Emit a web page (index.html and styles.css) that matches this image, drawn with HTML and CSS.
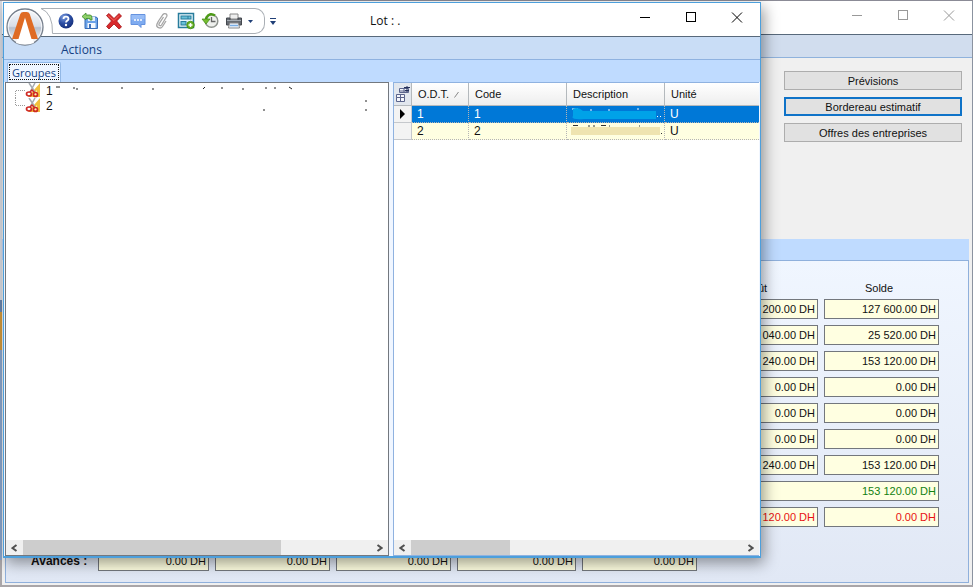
FILE: index.html
```html
<!DOCTYPE html>
<html lang="fr">
<head>
<meta charset="utf-8">
<title>Lot</title>
<link rel="stylesheet" href="styles.css">
</head>
<body>
<main class="desktop">
  <section class="window back">
    <header class="back-title">
      <div class="caption">
        <button aria-label="Réduire"><svg width="12" height="12"><path d="M1 5.500h10"/></svg></button>
        <button aria-label="Agrandir"><svg width="12" height="12"><rect x="1.500" y=".5" width="9" height="9"/></svg></button>
        <button aria-label="Fermer"><svg width="12" height="12"><path d="M1 0.500l10 10M11 .5l-10 10"/></svg></button>
      </div>
    </header>
    <div class="back-ribbon"></div>
    <div class="actions">
      <button>Prévisions</button>
      <button class="selected">Bordereau estimatif</button>
      <button>Offres des entreprises</button>
    </div>
    <div class="band"></div>
    <div class="panel">
      <div class="amounts">
        <span class="head">Coût</span><span class="head">Solde</span>
        <input readonly aria-label="Coût 1" value="200.00 DH"><input readonly aria-label="Solde 1" value="127 600.00 DH">
        <input readonly aria-label="Coût 2" value="040.00 DH"><input readonly aria-label="Solde 2" value="25 520.00 DH">
        <input readonly aria-label="Coût 3" value="240.00 DH"><input readonly aria-label="Solde 3" value="153 120.00 DH">
        <input readonly aria-label="Coût 4" value="0.00 DH"><input readonly aria-label="Solde 4" value="0.00 DH">
        <input readonly aria-label="Coût 5" value="0.00 DH"><input readonly aria-label="Solde 5" value="0.00 DH">
        <input readonly aria-label="Coût 6" value="0.00 DH"><input readonly aria-label="Solde 6" value="0.00 DH">
        <input readonly aria-label="Coût 7" value="240.00 DH"><input readonly aria-label="Solde 7" value="153 120.00 DH">
        <input readonly class="wide green" aria-label="Total" value="153 120.00 DH">
        <input readonly class="red" aria-label="Coût 8" value="120.00 DH"><input readonly class="red" aria-label="Solde 8" value="0.00 DH">
      </div>
      <div class="advances">
        <label for="av1">Avances :</label>
        <input readonly id="av1" class="first" value="0.00 DH">
        <input readonly aria-label="Avances 2" value="0.00 DH">
        <input readonly aria-label="Avances 3" value="0.00 DH">
        <input readonly aria-label="Avances 4" class="larger" value="0.00 DH">
        <input readonly aria-label="Avances 5" value="0.00 DH">
      </div>
    </div>
  </section>

  <section class="window front">
    <header class="front-title">
      <div class="toolbar">
        <svg class="curve" width="14" height="26"><path d="M0 .5Q12 5 11.500 25.500H14M0 .5H14"/></svg>
        <button aria-label="Aide"><svg width="18" height="18" viewBox="0 0 18 18"><defs><radialGradient id="hb" cx=".35" cy=".25" r=".8"><stop offset="0" stop-color="#7f9fe0"/><stop offset=".5" stop-color="#2c4fa5"/><stop offset="1" stop-color="#142d78"/></radialGradient></defs><circle cx="9" cy="9" r="7.500" fill="url(#hb)"/><path d="M6.500 7Q6.600 4.700 9 4.700T11.500 7C11.500 8.500 9 8.700 9 10.600" fill="none" stroke="#fff" stroke-width="1.800"/><circle cx="9" cy="13" r="1.200" fill="#fff"/></svg></button>
        <button aria-label="Enregistrer et fermer"><svg width="18" height="18" viewBox="0 0 18 18"><path d="M4 5h11l1.500 1v10.500H4z" fill="#6ba2e8" stroke="#376cb8"/><rect x="7" y="5" width="7" height="4" fill="#e4effc"/><rect x="6.500" y="11" width="8" height="5" fill="#f4f8fe"/><rect x="8" y="12" width="2" height="4" fill="#3f72bd"/><path d="M1 4.500L5 1v2h4q2 0 2 3v2H9V6.500H5V8z" fill="#8ed069" stroke="#3e8c2a" stroke-width=".8"/></svg></button>
        <button aria-label="Supprimer"><svg width="18" height="18" viewBox="0 0 18 18"><path d="M1.500 3.500L4 1.500 9 6.500 14 1.500 16.500 4 11.700 9 16.500 15 14 17 9 12 4 17 1.500 14.500 6.500 9z" fill="#d8292b" stroke="#a51519" stroke-width=".8"/><path d="M3 3.500l6 5 5-5" fill="none" stroke="#f06a60"/></svg></button>
        <button aria-label="Commentaire"><svg width="18" height="18" viewBox="0 0 18 18"><path d="M2 2.500h14v10h-4v3l-3-3H2z" fill="#7eabf0" stroke="#6592df"/><path d="M2.500 3h13v4q-7-1-13 1z" fill="#98bdf6"/><path d="M5 8h2M8 8h2M11 8h2" stroke="#fff" stroke-width="1.500"/></svg></button>
        <button aria-label="Pièce jointe"><svg width="18" height="18" viewBox="0 0 18 18"><path d="M5.500 9l4.500-6.500c1.500-2 5-.3 3.700 2L8.500 13c-1 1.500-3.300.3-2.400-1.300L10.500 5M13 9l-3.500 5.500C7.500 17.500 2.600 15.500 4 12l1.500-3" fill="none" stroke="#a5a5a5" stroke-width="1.300"/></svg></button>
        <button aria-label="Ajouter une vue"><svg width="18" height="18" viewBox="0 0 18 18"><rect x="1.500" y="1.500" width="15" height="14" fill="#e8f7fc" stroke="#287c9c" stroke-width="1.500"/><rect x="4" y="4" width="10" height="3" fill="#68c0d8" stroke="#287c9c"/><rect x="4" y="9.500" width="5" height="3.500" fill="#68c0d8" stroke="#287c9c"/><path d="M11 4v3" stroke="#287c9c"/><circle cx="13.500" cy="13" r="3.800" fill="#67af27" stroke="#39850c" stroke-width=".7"/><path d="M11.500 13h4M13.500 11v4" stroke="#fff" stroke-width="1.500"/></svg></button>
        <button aria-label="Historique"><svg width="18" height="18" viewBox="0 0 18 18"><circle cx="10.500" cy="9" r="6.300" fill="#eef0ed" stroke="#8e938d" stroke-width="1.500"/><path d="M10.500 5v4.500h4" fill="none" stroke="#666" stroke-width="1.300"/><path d="M14 3.500Q9 0 5.500 5.500L5 8" fill="none" stroke="#4e9b18" stroke-width="2.500"/><path d="M1 7h8l-4 5z" fill="#75bd2f" stroke="#3d8810" stroke-width=".7"/></svg></button>
        <button aria-label="Imprimer"><svg width="18" height="18" viewBox="0 0 18 18"><path d="M5 2h8v5H5z" fill="#eee" stroke="#888"/><path d="M1.500 6H5v2h8V6h3.500v7h-15z" fill="#666b72" stroke="#44484e"/><path d="M2 8.500h14" stroke="#a5abb2"/><path d="M4.500 11h9l1 5h-11z" fill="#eff5fc" stroke="#888"/><path d="M5 13.500h8" stroke="#79aee5" stroke-width="1.500"/></svg></button>
        <button class="drop" aria-label="Options d'impression"><svg width="5" height="3"><path d="M0 0h5L2.500 3z" fill="#203f77"/></svg></button>
      </div>
      <button class="customize" aria-label="Personnaliser"><svg width="6" height="7"><path d="M0 .5h6" stroke="#203f77"/><path d="M0 3h6L3 7z" fill="#203f77"/></svg></button>
      <h1>Lot : .</h1>
      <div class="caption">
        <button aria-label="Réduire"><svg width="12" height="12"><path d="M1 5.500h10"/></svg></button>
        <button aria-label="Agrandir"><svg width="12" height="12"><rect x="1.500" y=".5" width="9" height="9"/></svg></button>
        <button aria-label="Fermer"><svg width="12" height="12"><path d="M1 0.500l10 10M11 .5l-10 10"/></svg></button>
      </div>
      <button class="orb" aria-label="Menu principal"><svg width="40" height="40" viewBox="0 0 40 40"><defs><linearGradient id="orb" x2="0" y2="1"><stop offset="0" stop-color="#fafbfd"/><stop offset=".48" stop-color="#d7dde7"/><stop offset=".52" stop-color="#b7c0ce"/><stop offset="1" stop-color="#fff"/></linearGradient></defs><circle cx="20" cy="20" r="18" fill="url(#orb)" stroke="#77808d" stroke-width="1.300"/><circle cx="20" cy="20" r="16.700" fill="none" stroke="#fff" stroke-opacity=".8"/><path d="M17 12h5l7 24q-9 3-18 0z" fill="#fff"/><path d="M7 32L15.300 7q.7-2 3-2h3.400q2.300 0 3 2L33 32h-6.500L20 10.500 13.500 32z" fill="#df6b24"/></svg></button>
    </header>
    <nav class="ribbon"><button>Actions</button></nav>
    <div class="tabs"><button>Groupes</button></div>
    <div class="panes">
      <div class="pane tree-pane">
        <ul class="tree">
          <li><svg class="branch" width="10" height="15"><path d="M.5 15V7.500H10"/></svg><svg class="tool" width="16" height="15" viewBox="0 0 16 15"><use href="#scissors"/></svg><span>1</span><svg class="traces" width="244" height="14"><path d="M2 3h4M19 4h2M22 5h2M67 4h2M98 5h2M149 5l2-2M167 4h2M188 5h2M211 4h2M220 4h2M235 3l3 2"/></svg></li>
          <li><svg class="branch" width="10" height="15"><path d="M.5 0v7.500H10"/></svg><svg class="tool" width="16" height="15" viewBox="0 0 16 15"><g id="scissors"><path d="M15 0v14H3z" fill="#f2c03b"/><path d="M12 7v5H7z" fill="#fff0b0"/><path d="M4 0l6 9M10 0L5 9" stroke="#a5aab0" stroke-width="1.500"/><ellipse cx="4" cy="11" rx="2.500" ry="2" fill="none" stroke="#cf2924" stroke-width="1.700"/><ellipse cx="10.500" cy="11.500" rx="2" ry="2" fill="none" stroke="#cf2924" stroke-width="1.700"/><path d="M5 9l2-2 3 3" fill="none" stroke="#cf2924" stroke-width="1.500"/></g></svg><span>2</span><svg class="traces" width="320" height="14"><path d="M209 11h2M311 2h2M311 11h2"/></svg></li>
        </ul>
        <div class="scroll">
          <button aria-label="Gauche"><svg width="7" height="8"><path d="M5.500 1l-4 3 4 3"/></svg></button>
          <div class="track"><div class="thumb long"></div></div>
          <button aria-label="Droite"><svg width="7" height="8"><path d="M1.500 1l4 3-4 3"/></svg></button>
        </div>
      </div>
      <div class="pane list-pane">
        <table>
          <colgroup><col class="c-mark"><col class="c-odt"><col class="c-std"><col class="c-std"><col></colgroup>
          <thead><tr>
            <th class="corner"><svg width="14" height="17" viewBox="0 0 14 17"><path d="M3.500 2.500h9v4h-9zM.5 8.500h8v3h-8zM.5 11.500h8v4h-8z" fill="#f4f6fc" stroke="#5b648b"/><path d="M8 2v4M4 5h8M4.500 8v7" stroke="#5b648b"/><path d="M8 1.500h6M9 4.500h4M11 0v6" stroke="#25315b"/></svg></th>
            <th>O.D.T. <svg class="sort" width="6" height="7"><path d="M.5 6.500L4.500 1"/></svg></th><th>Code</th><th>Description</th><th>Unité</th>
          </tr></thead>
          <tbody>
            <tr class="current"><td class="mark"><svg width="6" height="10"><path d="M0 0l5 5-5 5z"/></svg></td><td>1</td><td>1</td><td class="masked"><svg width="92" height="14"><path d="M2 2h6M20 3h2M38 3h2M67 2h2" stroke="#eef6ff"/><path d="M3 2q5-3 10 2h73v8H14Q0 13 3 9z" fill="#00a2e8"/><path d="M87 9.500h1M90 9.500h1" stroke="#fff"/></svg></td><td>U</td></tr>
            <tr><td class="mark"></td><td>2</td><td>2</td><td class="masked"><svg width="92" height="14"><path d="M3 1.500h5M18 2h2M23 2h2M31 1.500h5M39 2h1M69 2h1" stroke="#333"/><path d="M1 3h89v8H1z" fill="#efe4b0"/><path d="M91 9.500h1" stroke="#333"/></svg></td><td>U</td></tr>
          </tbody>
        </table>
        <div class="scroll">
          <button aria-label="Gauche"><svg width="7" height="8"><path d="M5.500 1l-4 3 4 3"/></svg></button>
          <div class="track"><div class="thumb short"></div></div>
          <button aria-label="Droite"><svg width="7" height="8"><path d="M1.500 1l4 3-4 3"/></svg></button>
        </div>
      </div>
    </div>
  </section>
</main>
</body>
</html>
```
FILE: styles.css
```css
* { box-sizing: border-box; }

body {
  margin: 0;
  font: 11px/14px "Liberation Sans", Arial, sans-serif;
  color: #111;
}

button {
  margin: 0;
  padding: 0;
  border: 0;
  background: none;
  font: inherit;
  color: inherit;
}

svg { display: block; flex: none; }

.desktop {
  position: relative;
  height: 100vh;
  min-height: 587px;
  padding: 1px 0 2px 2px;
  background: linear-gradient(#8b8b96 0 1px, #d9dbe2 1px 300px, #6985ae 300px 312px, #d2993b 312px 350px, #8aa5cd 350px 560px, #a9a6a9 560px);
  overflow: hidden;
}

.window { display: flex; flex-direction: column; }

/* Window behind the dialog */
.back {
  height: 100%;
  border-right: 1px solid #8b93a0;
  background: #f0f0f0;
}

.back-title {
  display: flex;
  justify-content: flex-end;
  height: 34px;
  padding: 9px 17px 0 0;
  border-bottom: 1px solid #58697b;
  background: #fff;
}

.caption { display: flex; gap: 34px; }

.caption svg {
  fill: none;
  stroke: #000;
  stroke-width: 1;
}

.back .caption svg { stroke: #999; }

.caption button { height: 12px; }

.back-ribbon {
  height: 23px;
  border-bottom: 1px solid #8fb2dc;
  background: #d1ddee;
}

.actions {
  display: flex;
  flex-direction: column;
  align-items: flex-end;
  gap: 7px;
  height: 181px;
  padding: 13px 10px 0 0;
}

.actions button {
  width: 178px;
  height: 19px;
  border: 1px solid #adadad;
  background: #e1e1e1;
}

.actions .selected { border: 2px solid #0f73c8; }

.band {
  height: 21px;
  margin-right: 3px;
  background: #bfdbff;
}

.panel {
  display: flex;
  flex: 1;
  flex-direction: column;
  margin: 0 3px 2px;
  border: 1px solid #8fb0dc;
  background: linear-gradient(#f0f6ff, #e1e8f5);
}

.amounts {
  display: grid;
  grid-template-columns: 120px 115px;
  justify-content: end;
  gap: 6px;
  padding: 20px 29px 24px 0;
}

.head {
  height: 12px;
  padding-right: 5px;
  text-align: center;
}

input {
  width: 115px;
  height: 20px;
  padding: 0 2px;
  border: 1px solid #73777d;
  border-radius: 0;
  background: #ffffe1;
  font: inherit;
  color: inherit;
  text-align: right;
}

.amounts input { width: 100%; }
.amounts .wide { grid-column: 1 / -1; }
.amounts .green { color: #128112; }
.amounts .red { color: #e81212; }

.advances {
  display: flex;
  align-items: center;
  gap: 6px;
  padding-left: 25px;
}

.advances label {
  width: 61px;
  font-size: 12px;
  font-weight: bold;
}

.advances .first { width: 111px; }
.advances .larger { width: 119px; }

/* Dialog */
.front {
  position: absolute;
  inset: 2px 212px 29px 3px;
  border: 1px solid #4c9fdc;
  border-bottom-width: 2px;
  background: #f0f6ff;
  box-shadow: 3px 5px 14px rgba(0, 0, 0, .4);
}

.front-title {
  position: relative;
  display: flex;
  flex: none;
  height: 34px;
  padding-left: 37px;
  border-bottom: 1px solid #58697b;
  background: #fff;
}

.toolbar {
  display: flex;
  align-items: center;
  gap: 6px;
  width: 224px;
  height: 26px;
  margin-top: 5px;
  border: 1px solid #aaafb5;
  border-left: 0;
  border-radius: 0 10px 10px 0;
  border-image: none;
  background: linear-gradient(#fff, #fff);
}

.curve {
  margin: 0 -4px 0 0;
  background: #fff;
}

.curve path {
  fill: none;
  stroke: #aaafb5;
}

.drop { margin-left: -1px; }

.customize {
  height: 7px;
  margin: 15px 0 0 5px;
}

.front h1 {
  flex: 1;
  margin: 10px 0 0 94px;
  font: 12px/16px "Open Sans", sans-serif;
}

.front-title .caption { padding: 9px 17px 0 0; }

.orb {
  position: absolute;
  top: 4px;
  left: 1px;
  z-index: 1;
}

.ribbon, .tabs {
  flex: none;
  color: #153f83;
  font: 12px/16px "Open Sans", sans-serif;
}

.ribbon {
  height: 23px;
  padding: 5px 0 0 57px;
  border-bottom: 1px solid #8fb2e0;
  background: #c9ddf6;
}

.ribbon button, .tabs button { display: block; }

.tabs {
  height: 22px;
  padding: 2px 0 0 3px;
  background: #bfdbff;
}

.tabs button {
  width: 54px;
  height: 20px;
  border: 1px solid #92b8e6;
  border-bottom: 0;
  border-radius: 2px 2px 0 0;
  outline: 1px dotted #111;
  outline-offset: -3px;
  background: #f0f6ff;
  font-size: 11px;
}

.panes {
  display: grid;
  flex: 1;
  grid-template-columns: 384fr 366fr;
  gap: 4px;
  min-height: 0;
  padding: 0 1px;
}

.pane {
  display: flex;
  flex-direction: column;
  justify-content: space-between;
  min-width: 0;
  border: 1px solid #73787f;
  background: #fff;
}

.list-pane { border-color: #8fb2e0; border-right: 0; }

.tree {
  margin: 0;
  padding: 0 0 0 9px;
  list-style: none;
  font-size: 12px;
}

.tree li {
  display: flex;
  align-items: center;
  height: 15px;
}

.tree span { width: 8px; margin-left: 5px; }

.branch path {
  fill: none;
  stroke: #999;
  stroke-dasharray: 1 1;
}

.traces path {
  fill: none;
  stroke: #222;
}

table {
  width: 100%;
  border-spacing: 0;
  table-layout: fixed;
}

.c-mark { width: 18px; }
.c-odt { width: 57px; }
.c-std { width: 98px; }

th {
  height: 23px;
  padding: 0 6px;
  border-right: 1px solid #b4b9bd;
  border-bottom: 1px solid #b4b9bd;
  background: linear-gradient(#fff, #eee);
  font-weight: normal;
  text-align: left;
  white-space: nowrap;
}

th:last-child, td:last-child { border-right: 0; }
.corner { padding: 0 2px; background: #e2e7ee; }
.sort { display: inline-block; margin-left: 2px; }
.sort path { stroke: #888; }

td {
  height: 17px;
  padding: 0 5px;
  border-right: 1px dotted #b5b5b5;
  border-bottom: 1px dotted #b5b5b5;
  background: #ffffe1;
  font-size: 12px;
}

.current td { background: #0078d7; color: #fff; }

td.mark, .current .mark {
  padding: 0 0 0 6px;
  border-right: 1px solid #c5c8cc;
  border-bottom: 1px solid #c5c8cc;
  background: #f3f3f3;
}

td.masked { padding: 0 0 0 3px; }

.scroll {
  display: flex;
  height: 15px;
  background: #f0f0f0;
}

.scroll button {
  display: grid;
  width: 17px;
  place-items: center;
}

.scroll path {
  fill: none;
  stroke: #505050;
  stroke-width: 2;
}

.track { flex: 1; }
.thumb { height: 15px; background: #cdcdcd; }
.long { width: 74%; }
.short { width: 30%; }
```
